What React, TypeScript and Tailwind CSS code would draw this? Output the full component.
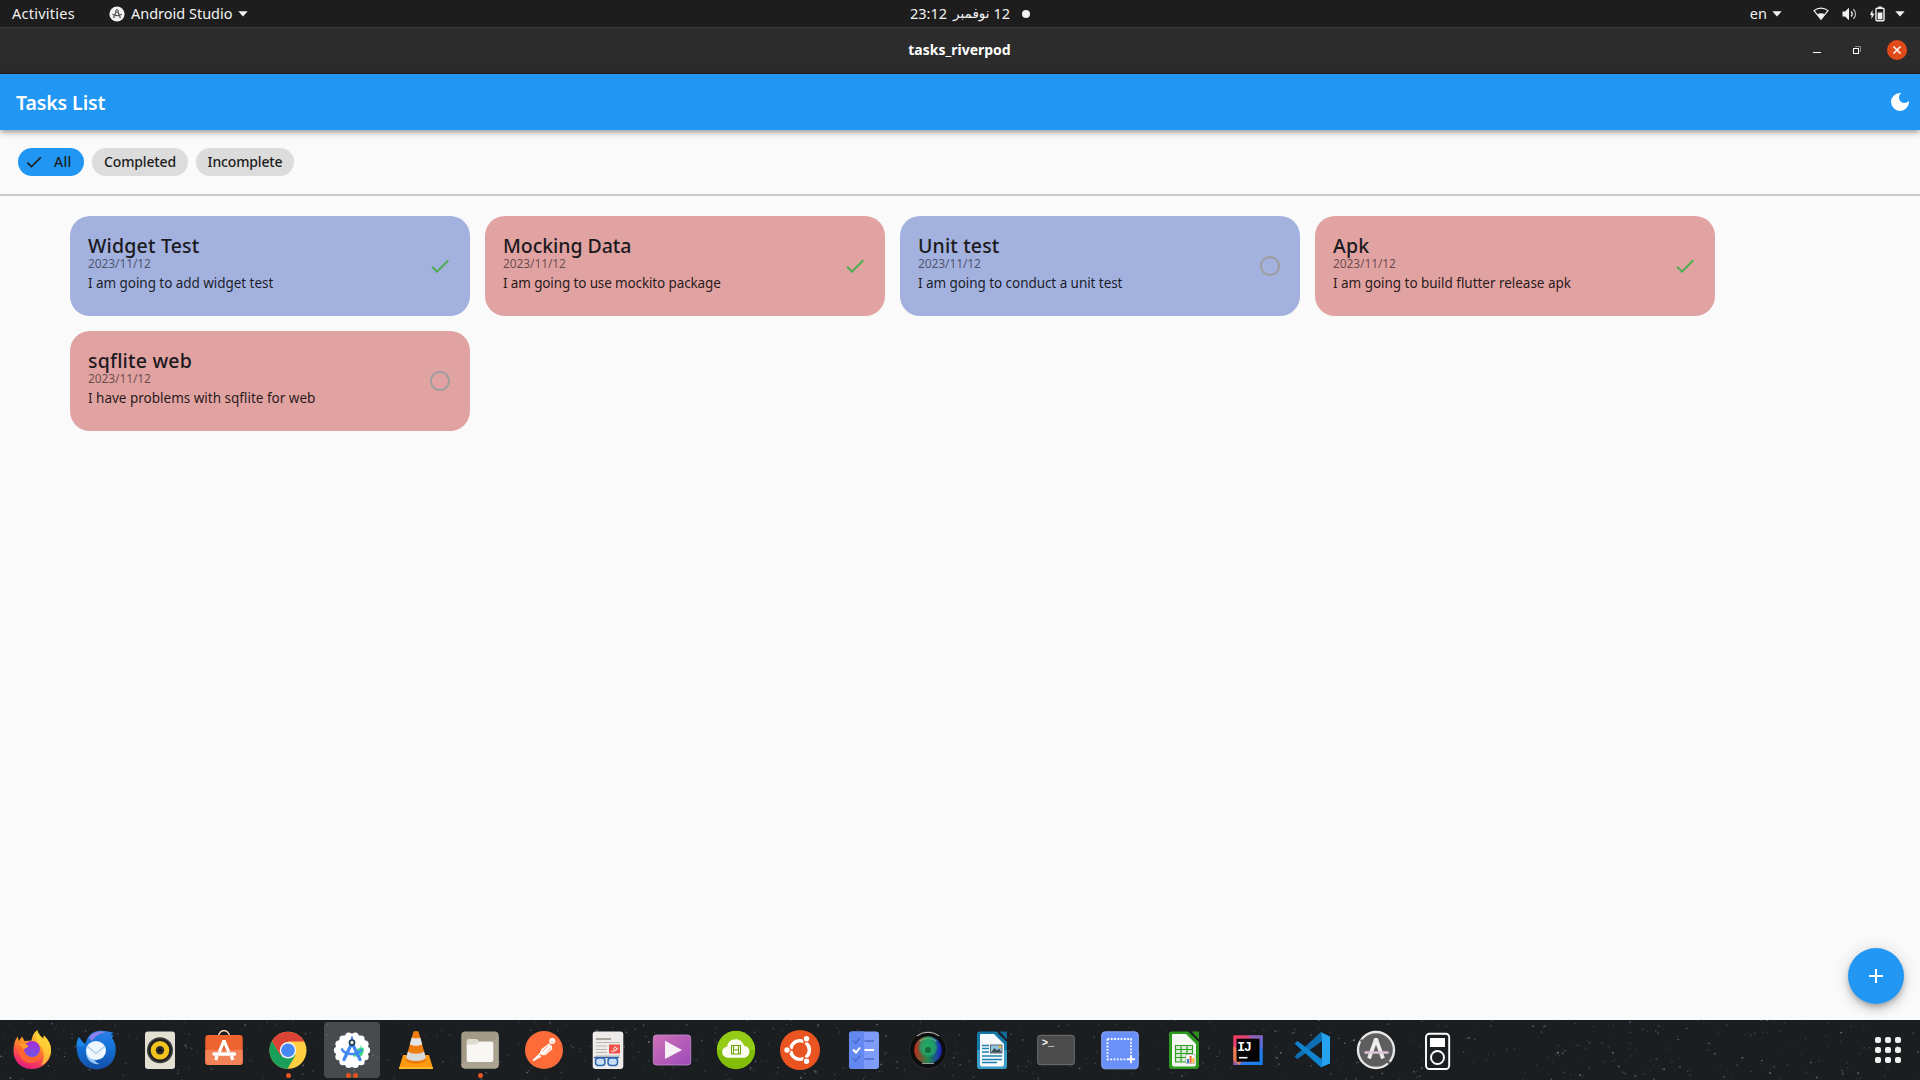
import type { ReactNode } from 'react';
import { MdAdd, MdCheck, MdDarkMode, MdRadioButtonUnchecked } from 'react-icons/md';

type Task = {
  title: string;
  titleClass: string;
  date: string;
  body: string;
  bodyClass: string;
  done: boolean;
  tone: 'blue' | 'red';
};

const tasks: Task[] = [
  { title: 'Widget Test', titleClass: 'tracking-[0.2px]', date: '2023/11/12', body: 'I am going to add widget test', bodyClass: 'tracking-[-0.05px]', done: true, tone: 'blue' },
  { title: 'Mocking Data', titleClass: 'tracking-[-0.06px]', date: '2023/11/12', body: 'I am going to use mockito package', bodyClass: 'tracking-[-0.13px]', done: true, tone: 'red' },
  { title: 'Unit test', titleClass: 'tracking-[0.15px]', date: '2023/11/12', body: 'I am going to conduct a unit test', bodyClass: 'tracking-[-0.06px]', done: false, tone: 'blue' },
  { title: 'Apk', titleClass: 'tracking-[0.2px]', date: '2023/11/12', body: 'I am going to build flutter release apk', bodyClass: 'tracking-[-0.03px]', done: true, tone: 'red' },
  { title: 'sqflite web', titleClass: 'tracking-[0.2px]', date: '2023/11/12', body: 'I have problems with sqflite for web', bodyClass: '', done: false, tone: 'red' },
];

function Caret() {
  return (
    <svg width="10" height="6" viewBox="0 0 10 6" fill="#f2f2f2">
      <path d="M0.3 0.3h9.4L5 5.6z" />
    </svg>
  );
}

function TopBar() {
  return (
    <header className="relative flex h-[27px] items-center bg-[#1d1d1d] text-[14.5px] leading-[22px] text-[#f2f2f2]">
      <span className="ml-3 pb-[2px] tracking-[0.25px]">Activities</span>
      <svg className="ml-[34px]" width="16" height="16" viewBox="0 0 16 16">
        <circle cx="8" cy="8" r="7.6" fill="#f2f2f2" />
        <path d="M8 3.5 4.6 12M8 3.5 11.4 12M3.4 8.3c2.5 1.8 6.7 1.8 9.2 0" stroke="#555" strokeWidth="1.3" fill="none" />
        <circle cx="8" cy="5" r="1.3" fill="#f2f2f2" stroke="#555" />
      </svg>
      <span className="ml-[6px] pb-[2px]">Android Studio</span>
      <div className="ml-[5px]"><Caret /></div>
      <div className="absolute left-[910px] flex items-center" dir="ltr">
        <span className="pb-[2px]">23:12</span>
        <span className="ml-[6px] pb-[1px] font-['DejaVu_Sans',sans-serif] text-[13.5px]" dir="rtl">نوفمبر</span>
        <span className="ml-1 pb-[2px]">12</span>
        <i className="ml-3 size-2 rounded-full bg-[#f2f2f2]" />
      </div>
      <div className="ml-auto flex items-center pr-[15px]">
        <span className="pb-[2px]">en</span>
        <div className="ml-[5px]"><Caret /></div>
        <svg className="ml-[31px]" width="16" height="14" viewBox="0 0 16 14">
          <path d="M1 3.6C5 0.3 11 0.3 15 3.6L8 12.3z" fill="none" stroke="#f2f2f2" strokeWidth="1.2" />
          <path d="M4.3 7.3C6.5 5.8 9.5 5.8 11.7 7.3L8 12.3z" fill="#f2f2f2" />
        </svg>
        <svg className="ml-[13px]" width="16" height="14" viewBox="0 0 16 14" fill="none" stroke="#f2f2f2">
          <path d="M0.5 4.5h2.5L7 0.8v12.4L3 9.5H0.5z" fill="#f2f2f2" stroke="none" />
          <path d="M9 4.5c1.5 1.5 1.5 3.5 0 5" strokeWidth="1.3" />
          <path d="M11.3 2.2c3 3 3 6.600 0 9.600" strokeWidth="1.3" opacity=".75" />
        </svg>
        <svg className="ml-3" width="15" height="16" viewBox="0 0 15 16">
          <path d="M2.5 3.5v4h2L1.5 13V9H0z" fill="#f2f2f2" />
          <rect x="6" y="2.2" width="8" height="12.6" rx="1" fill="none" stroke="#f2f2f2" strokeWidth="1.4" />
          <rect x="8.3" y="0.5" width="3.4" height="1.5" fill="#f2f2f2" />
          <rect x="7.7" y="6.5" width="4.7" height="6.8" fill="#f2f2f2" />
        </svg>
        <div className="ml-[10px]"><Caret /></div>
      </div>
    </header>
  );
}

function TitleBar() {
  return (
    <div className="relative flex h-[47px] items-center justify-end border-t border-b border-t-[#3b3b3b] border-b-[#1f1f1f] bg-[#2c2c2c] pr-[13px] pb-[1px]">
      <div className="absolute inset-0 flex items-center justify-center pr-[1px] pb-[3px] text-[14px] font-bold text-white">
        tasks_riverpod
      </div>
      <i className="mt-[5px] mr-8 h-px w-2 bg-white" />
      <svg className="mr-[26px]" width="8" height="8" viewBox="0 0 8 8" fill="none">
        <path d="M2 0.5h5.5V6" stroke="#8a8a8a" />
        <rect x="0.5" y="2.5" width="5" height="5" stroke="#fff" />
      </svg>
      <svg width="20" height="20" viewBox="0 0 20 20">
        <circle cx="10" cy="10" r="10" fill="#e04b19" />
        <path d="M6.5 6.5l7 7M13.5 6.5l-7 7" stroke="#fff" strokeWidth="1.5" />
      </svg>
    </div>
  );
}

function Chip({ label, selected = false, className, labelClass }: { label: string; selected?: boolean; className: string; labelClass: string }) {
  return (
    <button className={`flex h-7 items-center rounded-full pb-[2px] text-[14px] font-medium text-[#1c1c1c] ${className}`}>
      {selected && <MdCheck className="mt-[2px] mr-[10px] ml-[6px] text-[20px]" />}
      <span className={labelClass}>{label}</span>
    </button>
  );
}

function TaskCard({ task }: { task: Task }) {
  return (
    <article className={`flex h-[100px] items-center justify-between rounded-[20px] px-[18px] ${task.tone === 'blue' ? 'bg-[#a3b1df]' : 'bg-[#e1a2a2]'}`}>
      <div className="flex h-full flex-col items-start pt-[18px] whitespace-nowrap">
        <span className={`h-[23px] text-[19.5px] leading-[23px] font-medium text-[#1c1a20] ${task.titleClass}`}>{task.title}</span>
        <span className="h-[14px] text-[12px] leading-[14px] tracking-[-0.1px] text-black/55">{task.date}</span>
        <span className={`mt-[3px] text-[13.5px] leading-[18px] text-black/85 ${task.bodyClass}`}>{task.body}</span>
      </div>
      {task.done ? <MdCheck className="text-2xl text-[#4caf50]" /> : <MdRadioButtonUnchecked className="text-2xl text-[#9e9e9e]" />}
    </article>
  );
}

type DockApp = { name: string; art: ReactNode; dots?: number; active?: boolean };

const scallops = Array.from({ length: 14 }, (_, i) => {
  const a = (i / 14) * Math.PI * 2;
  return { x: 20 + Math.cos(a) * 14.6, y: 20.3 + Math.sin(a) * 14.6 };
});

const apps: DockApp[] = [
  {
    name: 'Firefox',
    art: (
      <>
        <path d="M20 39C9 39 1 31 1.5 20 1.7 14 3 10 5.5 6.5L7 11l3-4.5 2.500 4.500 7-.5C20.500 5 22 2.500 25.500 0c0 4 3 5.500 6 9 0-1.500 0-3 .5-3.500 5 5 7.500 10 7 16.500C38 32 30 39 20 39z" fill="url(#ff)" />
        <path d="M25.500 0c0 4 3 5.500 6 9l.5-3.500c5 5 7.500 10 7 16.500-1 7-6 12-10 13.500 5-8 3-17-2-21-3-2.500-4-5-1.500-14.500z" fill="#ffd83a" opacity=".75" />
        <circle cx="20" cy="19" r="8" fill="url(#ffp)" />
        <path d="M7 14c4-1 7 0 9.500 2-2 2-3 2-5 3 1 6 6 9 11 8 4-1 6-4 6-7 2 6-3 13-10 13C10 33 5 25 7 14z" fill="#ff6a2a" opacity=".85" />
        <path d="M7 14c4-1 7 0 9.500 2-2 2-3 2-5 3z" fill="#ffa02a" />
      </>
    ),
  },
  {
    name: 'Thunderbird',
    art: (
      <>
        <path d="M3 7c2 2 3 5 6 7l-1 14C1 25-2 14 3 7z" fill="#1b86e8" />
        <path d="M13 6C18-1 29 0 38 3l-3.500 1.500 3 1L36 8c5 6 5 17 0 24-7 9-21 10-29 2-5-5-7-11-6-19 3 2 5 2 8 0 1-4 2-6 4-9z" fill="url(#tb)" />
        <path d="M13 8C17 1 25 1 30 2c-6 1-11 4-14 9z" fill="#8f80e8" />
        <path d="M10 22c0 8 6 13 14 12-4-1-5-3-6-6z" fill="#8fc6f8" />
        <ellipse cx="20" cy="20.5" rx="10" ry="9.5" fill="#eef7ff" />
        <path d="M11.500 16.500 20 23.500l8.500-7" stroke="#a9cbe8" strokeWidth="1.3" fill="none" />
      </>
    ),
  },
  {
    name: 'Rhythmbox',
    art: (
      <>
        <rect x="5" y="1.5" width="30" height="37.5" rx="3" fill="#e3dfd3" />
        <circle cx="20" cy="20.3" r="13" fill="#3a3a3c" />
        <circle cx="20" cy="20.3" r="11.3" fill="#1f1f22" />
        <circle cx="20" cy="20.3" r="9.3" fill="#f3c21c" />
        <circle cx="20" cy="20.3" r="4.2" fill="#2b2b2b" />
        <circle cx="20" cy="20.3" r="1.8" fill="#111" />
      </>
    ),
  },
  {
    name: 'Software',
    art: (
      <>
        <path d="M14.500 7c0-8.500 11-8.500 11 0" fill="none" stroke="#f5d9b8" strokeWidth="1.5" />
        <rect x="1.3" y="5" width="37.4" height="30" rx="3" fill="#ef6330" />
        <path d="M1.300 20h37.400v12a3 3 0 0 1-3 3H4.300a3 3 0 0 1-3-3z" fill="#f28257" />
        <g fill="none" stroke="#fff" strokeWidth="3.2">
          <path d="M18.800 11.500h2.400M20 10.500 15.300 22M20 10.500 24.700 22" />
          <path d="M10 24h20.500" strokeWidth="3.5" strokeLinecap="round" />
          <path d="M13 25.500 11.800 30M27.500 25.500l1.200 4.500" />
        </g>
      </>
    ),
  },
  {
    name: 'Chrome',
    dots: 1,
    art: (
      <>
        <circle cx="20" cy="20.3" r="18.5" fill="#fdcf41" />
        <path d="M4 11A18.500 18.500 0 0 0 19.500 38.800l8-13.800-7.500-4.500-8 3.500z" fill="#1a9f5b" />
        <path d="M4 11 12.300 24.900 20 20.300V11.500h16.200A18.500 18.500 0 0 0 4 11z" fill="#dc4337" />
        <circle cx="20" cy="20.3" r="8.3" fill="#f2f2f2" />
        <circle cx="20" cy="20.3" r="6.8" fill="#4688f4" />
      </>
    ),
  },
  {
    name: 'Android Studio',
    dots: 2,
    active: true,
    art: (
      <>
        <circle cx="20" cy="20.3" r="16.5" fill="#fff" />
        {scallops.map((s, i) => (
          <circle key={i} cx={s.x} cy={s.y} r="3.5" fill="#fff" />
        ))}
        <path d="M21 26.500c0-4 3-9 10.500-9 1 3-.5 8-3 9z" fill="#3ddc84" />
        <path d="m28 18 1.500-2.500" stroke="#3ddc84" />
        <path d="M19 15 12 29.500M21 15l7 14.500" stroke="#4285f4" strokeWidth="3.2" strokeLinecap="round" />
        <path d="M9.500 18.500c3 6.500 15 8 20.500 1" stroke="#4285f4" strokeWidth="2.5" fill="none" />
        <path d="M20 6.500v4" stroke="#4285f4" strokeWidth="2" />
        <circle cx="20" cy="12.5" r="2.5" fill="#fff" stroke="#14384a" strokeWidth="1.7" />
      </>
    ),
  },
  {
    name: 'VLC',
    art: (
      <>
        <path d="M7 25h26l4 13.500H3z" fill="#fb9a0c" />
        <path d="M3.500 37h33l.5 2H3z" fill="#ffb92e" />
        <path d="M17.500 1.500c1.500-.8 3.500-.8 5 0L30.500 30c-3 5-18 5-21 0z" fill="#ef7d0e" />
        <path d="m15.800 7.500-2 6.800c3.500 2 9 2 12.400 0l-2-6.800c-2 1.200-6 1.200-8.400 0z" fill="#e3e5e8" />
        <path d="m12 21.500-2 6.500c4 4 16 4 20 0l-2-6.500c-4 3-12 3-16 0z" fill="#d8dadd" />
      </>
    ),
  },
  {
    name: 'Files',
    dots: 1,
    art: (
      <>
        <rect x="1.3" y="1.5" width="37.4" height="37" rx="4" fill="#a29a85" />
        <path d="M1.300 34 38.700 6v28.500a4 4 0 0 1-4 4H5.300a4 4 0 0 1-4-4z" fill="#aaa391" />
        <path d="M6.700 11a2 2 0 0 1 2-2h8l3 3h9v4h-22z" fill="#dedbd0" />
        <path d="M6.700 14.500h10l3-3h11.600a2 2 0 0 1 2 2V30a2 2 0 0 1-2 2H8.700a2 2 0 0 1-2-2z" fill="#f8f7f4" />
      </>
    ),
  },
  {
    name: 'Postman',
    art: (
      <>
        <circle cx="20" cy="20" r="19" fill="#fd6c38" />
        <circle cx="28.3" cy="11" r="3" fill="#fff" />
        <path d="M25.500 13 17.500 19 15.500 23.500l3.500 2L27 17.500z" fill="#fff" />
        <path d="m18 22-9 8.500 8-4.500M27 15l.5 4-7 6" stroke="#fff" strokeWidth="1.5" fill="none" />
        <path d="m24.500 15-6 6.500M27 11l2.500 1.500" stroke="#fd6c38" strokeWidth=".7" />
      </>
    ),
  },
  {
    name: 'Document Viewer',
    art: (
      <>
        <rect x="4.7" y="1.5" width="30.6" height="37.5" rx="3" fill="#edeceb" />
        <path d="M8 9h15" stroke="#9b968a" strokeWidth="1.6" />
        <path d="M8 12.500h24M8 16h11M8 19.500h11M8 22.500h11M8 26h24" stroke="#b9b6b0" strokeWidth="1.2" />
        <rect x="21" y="14.5" width="11" height="9" fill="#ef5148" />
        <path d="M23 21c3 1 6-1 5.500-3-1-2-4 0-2.500 1.500s3 0 4.500-1.500" stroke="#fff" strokeWidth=".9" fill="none" />
        <path d="M6 27.500h25" stroke="#2d5d9b" strokeWidth="1.4" />
        <rect x="7.5" y="28" width="9.5" height="7.5" rx="3" fill="#c9def5" stroke="#2d68b4" strokeWidth="1.5" />
        <rect x="20" y="28" width="9.5" height="7.5" rx="3" fill="#c9def5" stroke="#2d68b4" strokeWidth="1.5" />
      </>
    ),
  },
  {
    name: 'Videos',
    art: (
      <>
        <rect x="1.3" y="5" width="37.4" height="30" rx="3" fill="url(#vid)" stroke="#c98fd0" strokeWidth=".8" />
        <path d="M13 10.700 30 20 13 29z" fill="#f7eef8" />
      </>
    ),
  },
  {
    name: 'Cloud Clips',
    art: (
      <>
        <circle cx="20" cy="20" r="19.2" fill="#82bd09" />
        <path d="M1 20a19 19 0 0 1 38 0z" fill="#93cb17" />
        <path d="M12 27.700a5.500 5.500 0 0 1-.8-11C11.500 12 15.500 9.300 19.500 9.300c4 0 7.500 2.500 8.500 6.700 7 0 7.500 11 0 11.700z" fill="#fbfdf4" />
        <path d="M15.500 15.500h9v8.500h-9zM17.500 19.700h5M17.500 15.500V24M22.500 15.500V24" stroke="#6ea408" strokeWidth="1.1" fill="none" />
      </>
    ),
  },
  {
    name: 'Ubuntu',
    art: (
      <>
        <circle cx="20" cy="20" r="20" fill="#e95420" />
        <circle cx="20" cy="20" r="9.3" fill="none" stroke="#fff" strokeWidth="3.6" />
        <path d="M20 20H5M20 20l8.500-14.500M20 20l8.500 14.500" stroke="#e95420" strokeWidth="1.5" />
        <circle cx="20" cy="20" r="7.4" fill="#e95420" />
        {[[7, 20], [26.5, 8.7], [26.5, 31.3]].map(([x, y]) => (
          <circle key={`${x}-${y}`} cx={x} cy={y} r="3.3" fill="#fff" stroke="#e95420" strokeWidth="1.2" />
        ))}
      </>
    ),
  },
  {
    name: 'To Do',
    art: (
      <>
        <rect x="5" y="1.5" width="30" height="37.5" rx="3" fill="#7e9dfb" />
        <path d="M8 1.500h12V39H8a3 3 0 0 1-3-3V4.500a3 3 0 0 1 3-3z" fill="#6488f2" />
        <path d="m9 10.500 2.500 2.500 4.500-5M20.500 11H30M9 28.500l2.500 2.500 4.500-5M20.500 29H30" stroke="#4c6dcb" strokeWidth="1.7" fill="none" />
        <path d="m9 19.500 3 3 4-5M20.500 20H30" stroke="#fff" strokeWidth="2" fill="none" />
      </>
    ),
  },
  {
    name: 'Camera',
    art: (
      <>
        <circle cx="20" cy="20" r="18.5" fill="#0d0d0e" stroke="#2e2e30" />
        <path d="M9 6a18 18 0 0 1 22 0" stroke="#c5c5c5" strokeWidth="1" fill="none" />
        <circle cx="20" cy="20" r="13.8" fill="url(#lens)" />
        <circle cx="20" cy="17.5" r="10.5" fill="url(#lensg)" />
        <circle cx="20" cy="20" r="3" fill="#125c33" opacity=".8" />
        <path d="M11.500 11.500c5-4.500 12-4.500 17 0" stroke="#7fe0a0" strokeWidth="1.5" opacity=".5" fill="none" />
        <path d="M14 33.500h12" stroke="#999" strokeWidth="1" />
      </>
    ),
  },
  {
    name: 'LibreOffice Writer',
    art: (
      <>
        <path d="M8 1.500h16l11 10.500v24a3 3 0 0 1-3 3H8a3 3 0 0 1-3-3V4.500a3 3 0 0 1 3-3z" fill="#1579a8" />
        <path d="M5 20h30v16a3 3 0 0 1-3 3H8a3 3 0 0 1-3-3z" fill="#3b9ec8" />
        <path d="M27.500 1.500H35v8z" fill="#0f6a97" />
        <path d="M9 4h13l10 10v20.500a2 2 0 0 1-2 2H10a2 2 0 0 1-2-2V5a1 1 0 0 1 1-1z" fill="#f7f9fa" />
        <path d="M10 15.500h7M10 18.500h7M10 22h7M10 26h20M10 29.500h20M10 32.500h15" stroke="#1b83b4" strokeWidth="1.4" />
        <rect x="18.5" y="15" width="11.5" height="8" fill="#8fc3e0" stroke="#3d4a55" strokeWidth=".8" />
        <path d="m19 22.500 3.500-4.500 2.500 2.500 2-2 2.500 4z" fill="#3f4b4f" />
        <circle cx="28" cy="16.7" r="1.3" fill="#f6b42c" />
      </>
    ),
  },
  {
    name: 'Terminal',
    art: (
      <>
        <rect x="1.7" y="5.3" width="36.6" height="29.4" rx="2.5" fill="#4b4b4b" stroke="#777" strokeWidth=".9" />
        <text x="5.8" y="15.5" fontFamily="Liberation Mono, monospace" fontWeight="700" fontSize="10.5" fill="#f5f5f5">&gt;_</text>
      </>
    ),
  },
  {
    name: 'Screenshot',
    art: (
      <>
        <rect x="1.7" y="1.8" width="36.6" height="37" rx="3.5" fill="#6a90fa" stroke="#8fabfa" strokeWidth=".9" />
        <rect x="7.5" y="9" width="23.5" height="20.3" fill="none" stroke="#fff" strokeWidth="1.8" strokeDasharray="1.8 1.5" />
        <path d="M27 29.300h8M31 25.300v8" stroke="#6a90fa" strokeWidth="4" />
        <path d="M27 29.300h8M31 25.300v8" stroke="#fff" strokeWidth="1.9" />
      </>
    ),
  },
  {
    name: 'LibreOffice Calc',
    art: (
      <>
        <path d="M8 1.500h16l11 10.500v24a3 3 0 0 1-3 3H8a3 3 0 0 1-3-3V4.500a3 3 0 0 1 3-3z" fill="#2f9a20" />
        <path d="M27.500 1.500H35v8z" fill="#2b8d1c" />
        <path d="M9 4h13l10 10v20.500a2 2 0 0 1-2 2H10a2 2 0 0 1-2-2V5a1 1 0 0 1 1-1z" fill="#f5f7f4" />
        <path d="M11.500 15.500h17v16.500h-17zM11.500 19.500h17M11.500 23.500h17M11.500 27.500h17M17 15.500V32M23 15.500V32" fill="#d9ecd6" stroke="#319f22" strokeWidth="1.2" />
        <rect x="22" y="24.5" width="9" height="9" fill="#fff" stroke="#aaa" strokeWidth=".7" />
        <path d="M24 33v-4" stroke="#2a84d2" strokeWidth="2" />
        <path d="M26.600 33v-7" stroke="#f0642c" strokeWidth="2" />
        <path d="M29.300 33v-5" stroke="#f6b42c" strokeWidth="2" />
      </>
    ),
  },
  {
    name: 'IntelliJ IDEA',
    art: (
      <>
        <rect x="5.3" y="5.3" width="29.4" height="29.7" fill="url(#ij)" />
        <path d="M5.300 16v14l6 5 6-10z" fill="#f78c40" opacity=".75" />
        <path d="M20 5.300h14.700V20z" fill="#6a6ad0" opacity=".7" />
        <rect x="8.5" y="8.7" width="23" height="23" fill="#050505" />
        <text x="9.3 16" y="21.3" fontFamily="Liberation Mono, monospace" fontWeight="700" fontSize="13" fill="#fff">IJ</text>
        <path d="M11 27.700h8.500" stroke="#fff" strokeWidth="1.6" />
      </>
    ),
  },
  {
    name: 'VS Code',
    art: (
      <>
        <path d="M2.500 26.500 5.500 29 30 11V2.500h-1.500z" fill="#0f6fb5" />
        <path d="M2.500 13.500 5.500 11 30 29.500v7.500h-1.500z" fill="#1084d0" />
        <path d="m28.500 2 9.500 4.500v27L28.500 37.500c1-1 1.500-2 1.500-3.500V6c0-1.500-.5-3-1.500-4z" fill="#25a3f0" />
      </>
    ),
  },
  {
    name: 'Software Updater',
    art: (
      <>
        <circle cx="20" cy="20" r="18" fill="#5e5e5e" stroke="#e6e6e6" strokeWidth="2.4" />
        <path d="m4.500 10 4.500 3M31 31l3 2.500" stroke="#5e5e5e" strokeWidth="2.4" />
        <path d="M18.500 10h3M20 9 13 28.500M20 9l7 19.500" stroke="#ededed" strokeWidth="3.8" fill="none" />
        <path d="M9.500 22.500h22" stroke="#dcc3da" strokeWidth="2.6" strokeLinecap="round" />
      </>
    ),
  },
  {
    name: 'Media Player',
    art: (
      <>
        <rect x="6" y="3.7" width="23.2" height="35.3" rx="3.5" fill="#1c1f22" stroke="#fff" strokeWidth="1.9" />
        <rect x="10" y="8" width="15" height="9" fill="#fff" />
        <circle cx="17.5" cy="27.5" r="6.5" fill="none" stroke="#fff" strokeWidth="1.9" />
      </>
    ),
  },
];

function makeStars() {
  let seed = 7;
  const next = () => {
    seed = (seed * 16807) % 2147483647;
    return seed / 2147483647;
  };
  return Array.from({ length: 700 }, () => ({
    x: next() * 1920,
    y: next() * 60,
    r: 0.5 + next() * 0.5,
    o: 0.12 + next() * next() * 0.5,
  }));
}

const stars = makeStars();

function Dock() {
  return (
    <nav className="relative flex h-[60px] shrink-0 items-center overflow-hidden bg-[#1b1e21]">
      <svg className="absolute inset-0" width="1920" height="60" viewBox="0 0 1920 60">
        <defs>
          <linearGradient id="ff" x1=".7" y1="0" x2=".3" y2="1">
            <stop offset="0" stopColor="#ffe03c" /><stop offset=".4" stopColor="#ff9226" /><stop offset=".7" stopColor="#fb4a4c" /><stop offset="1" stopColor="#e31587" />
          </linearGradient>
          <linearGradient id="ffp" x1="0" y1="0" x2="0" y2="1">
            <stop offset="0" stopColor="#a62bd0" /><stop offset="1" stopColor="#6f55e8" />
          </linearGradient>
          <linearGradient id="tb" x1="0" y1="0" x2="0" y2="1">
            <stop offset="0" stopColor="#2f7fe6" /><stop offset=".4" stopColor="#1373d9" /><stop offset="1" stopColor="#1450a8" />
          </linearGradient>
          <linearGradient id="vid" x1="0" y1="0" x2="1" y2="1">
            <stop offset="0" stopColor="#d070b8" /><stop offset="1" stopColor="#9c4bb8" />
          </linearGradient>
          <linearGradient id="lens">
            <stop offset="0" stopColor="#c2281c" /><stop offset=".5" stopColor="#1d8a4a" /><stop offset="1" stopColor="#1a22c8" />
          </linearGradient>
          <radialGradient id="lensg">
            <stop offset="0" stopColor="#23a85c" /><stop offset=".7" stopColor="#23a86c" stopOpacity=".8" /><stop offset="1" stopColor="#1f9a6a" stopOpacity="0" />
          </radialGradient>
          <linearGradient id="ij" x1="0" y1="0" x2="1" y2="1">
            <stop offset="0" stopColor="#fb3a5f" /><stop offset=".45" stopColor="#c8508c" /><stop offset=".65" stopColor="#2a7de8" /><stop offset="1" stopColor="#147ff0" />
          </linearGradient>
        </defs>
        {stars.map((s, i) => (
          <circle key={i} cx={s.x} cy={s.y} r={s.r} fill="#b4c4d0" opacity={s.o} />
        ))}
      </svg>
      {apps.map((app) => (
        <div key={app.name} className="relative flex h-full w-16 items-center justify-center" title={app.name}>
          {app.active && <div className="absolute inset-x-1 inset-y-[2px] rounded bg-white/20" />}
          <svg className="relative" width="40" height="40" viewBox="0 0 40 40">{app.art}</svg>
          <div className="absolute inset-x-0 bottom-[2px] flex justify-center gap-[2.5px]">
            {Array.from({ length: app.dots ?? 0 }, (_, i) => (
              <i key={i} className="size-[5px] rounded-full bg-[#e95420]" />
            ))}
          </div>
        </div>
      ))}
      <div className="relative mr-[19px] ml-auto grid grid-cols-3 gap-1">
        {Array.from({ length: 9 }, (_, i) => (
          <i key={i} className="size-[6px] rounded-[2px] bg-[#f0f0ee]" />
        ))}
      </div>
    </nav>
  );
}

export default function App() {
  return (
    <div className="flex h-[1080px] w-[1920px] flex-col overflow-hidden bg-[#fafafa] font-['Noto_Sans','Open_Sans',sans-serif]">
      <TopBar />
      <TitleBar />
      <div className="relative z-10 flex h-14 shrink-0 items-center justify-between bg-[#2196f3] pr-2 pl-4 text-white shadow-[0_2px_4px_-1px_rgba(0,0,0,0.2),0_4px_5px_rgba(0,0,0,0.14),0_1px_10px_rgba(0,0,0,0.12)]">
        <h1 className="pt-[2px] text-[19.5px] font-semibold tracking-[-0.1px]">Tasks List</h1>
        <MdDarkMode className="text-2xl" />
      </div>
      <div className="flex h-[66px] shrink-0 items-start gap-2 border-b-2 border-[#c9c9c9] pt-[18px] pl-[18px]">
        <Chip label="All" selected className="w-[66px] bg-[#2196f3]" labelClass="tracking-[0.3px]" />
        <Chip label="Completed" className="w-24 justify-center bg-[#dcdcdc]" labelClass="tracking-[-0.15px]" />
        <Chip label="Incomplete" className="w-[98px] justify-center bg-[#dcdcdc]" labelClass="tracking-[-0.15px]" />
      </div>
      <main className="relative min-h-0 flex-1 px-[70px] pt-5">
        <div className="grid grid-cols-[repeat(4,400px)] gap-[15px]">
          {tasks.map((task) => <TaskCard key={task.title} task={task} />)}
        </div>
        <button className="absolute right-4 bottom-4 flex size-14 items-center justify-center rounded-full bg-[#2196f3] text-2xl text-white shadow-[0_3px_5px_-1px_rgba(0,0,0,0.2),0_6px_10px_rgba(0,0,0,0.14),0_1px_18px_rgba(0,0,0,0.12)]">
          <MdAdd />
        </button>
      </main>
      <Dock />
    </div>
  );
}
